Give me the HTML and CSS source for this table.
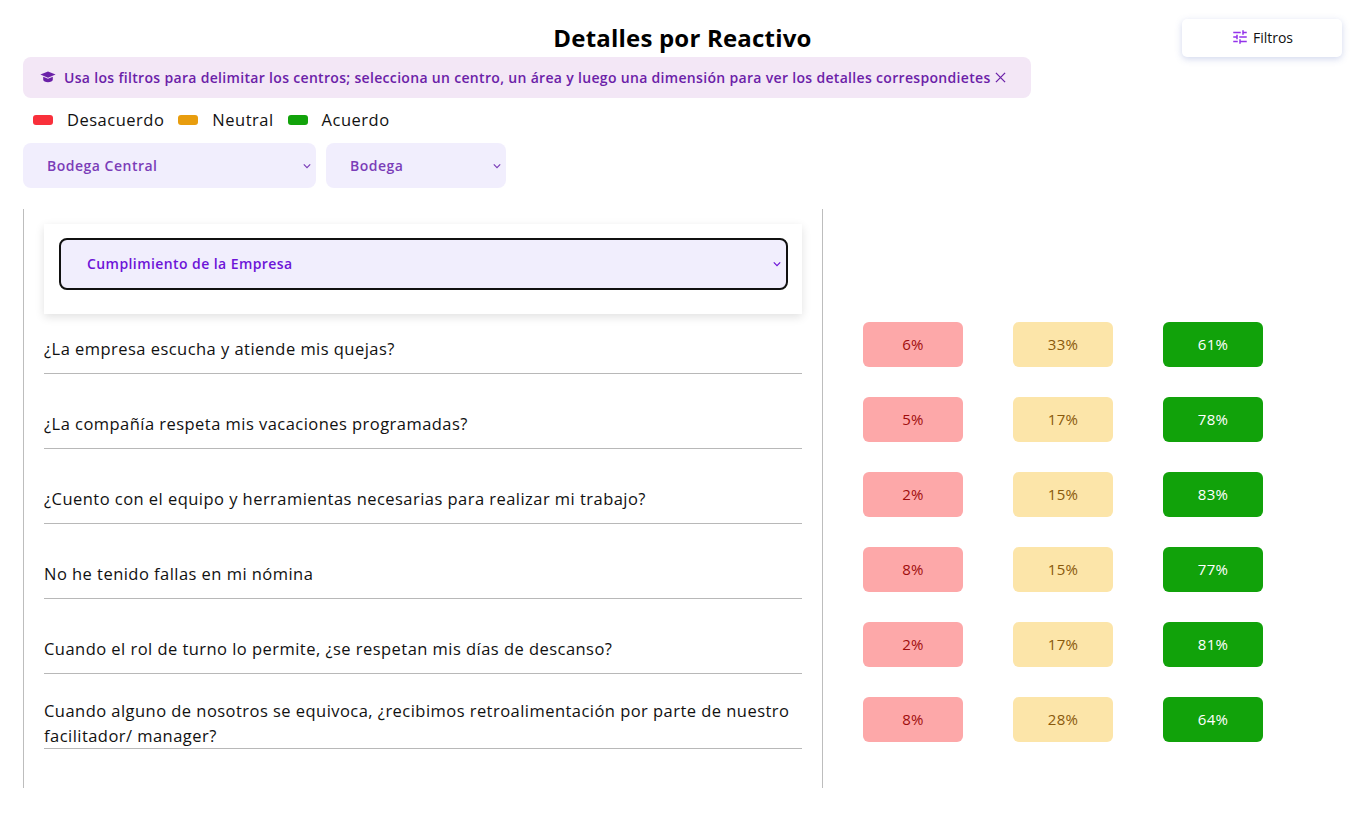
FILE: index.html
```html
<!DOCTYPE html>
<html lang="es">
<head>
<meta charset="utf-8">
<title>Detalles por Reactivo</title>
<link rel="stylesheet" href="styles.css">
</head>
<body>
<div class="page">
  <header class="header">
    <div></div>
    <h1 class="title">Detalles por Reactivo</h1>
    <button class="filter-btn">
      <svg class="tune" viewBox="0 0 24 24" width="18" height="18"><path d="M3 17v2h6v-2H3zM3 5v2h10V5H3zm10 16v-2h8v-2h-8v-2h-2v6h2zM7 9v2H3v2h4v2h2V9H7zm14 4v-2H11v2h10zm-6-4h2V7h4V5h-4V3h-2v6z" fill="currentColor"/></svg>
      <span>Filtros</span>
    </button>
  </header>

  <div class="alert">
    <svg class="cap" viewBox="0 0 20 16" width="16" height="14"><path d="M10 1 L19.5 5 L10 9 L0.5 5 Z" fill="currentColor"/><path d="M4 7.6 V11.5 C4 13.4 7 14.6 10 14.6 C13 14.6 16 13.4 16 11.5 V7.6 L10 10.2 Z" fill="currentColor"/></svg>
    <span class="alert-text">Usa los filtros para delimitar los centros; selecciona un centro, un área y luego una dimensión para ver los detalles correspondietes</span>
    <svg class="close" viewBox="0 0 12 12" width="11" height="11"><path d="M1 1 L11 11 M11 1 L1 11" stroke="currentColor" stroke-width="1.4" fill="none"/></svg>
  </div>

  <div class="legend">
    <span class="sw sw-red"></span><span class="lg-label">Desacuerdo</span>
    <span class="sw sw-orange"></span><span class="lg-label">Neutral</span>
    <span class="sw sw-green"></span><span class="lg-label">Acuerdo</span>
  </div>

  <div class="selects">
    <div class="select sel-center">
      <span>Bodega Central</span>
      <svg viewBox="0 0 10 6" width="8" height="6"><path d="M1 1 L5 5 L9 1" stroke="currentColor" stroke-width="1.5" fill="none"/></svg>
    </div>
    <div class="select sel-area">
      <span>Bodega</span>
      <svg viewBox="0 0 10 6" width="8" height="6"><path d="M1 1 L5 5 L9 1" stroke="currentColor" stroke-width="1.5" fill="none"/></svg>
    </div>
  </div>

  <div class="content">
    <section class="panel">
      <div class="card">
        <div class="dim-select">
          <span>Cumplimiento de la Empresa</span>
          <svg viewBox="0 0 10 6" width="8" height="6"><path d="M1 1 L5 5 L9 1" stroke="currentColor" stroke-width="1.5" fill="none"/></svg>
        </div>
      </div>
      <ul class="questions">
        <li class="q">¿La empresa escucha y atiende mis quejas?</li>
        <li class="q">¿La compañía respeta mis vacaciones programadas?</li>
        <li class="q">¿Cuento con el equipo y herramientas necesarias para realizar mi trabajo?</li>
        <li class="q">No he tenido fallas en mi nómina</li>
        <li class="q">Cuando el rol de turno lo permite, ¿se respetan mis días de descanso?</li>
        <li class="q">Cuando alguno de nosotros se equivoca, ¿recibimos retroalimentación por parte de nuestro facilitador/ manager?</li>
      </ul>
    </section>
    <section class="scores">
      <div class="score-row"><span class="b b-red">6%</span><span class="b b-yellow">33%</span><span class="b b-green">61%</span></div>
      <div class="score-row"><span class="b b-red">5%</span><span class="b b-yellow">17%</span><span class="b b-green">78%</span></div>
      <div class="score-row"><span class="b b-red">2%</span><span class="b b-yellow">15%</span><span class="b b-green">83%</span></div>
      <div class="score-row"><span class="b b-red">8%</span><span class="b b-yellow">15%</span><span class="b b-green">77%</span></div>
      <div class="score-row"><span class="b b-red">2%</span><span class="b b-yellow">17%</span><span class="b b-green">81%</span></div>
      <div class="score-row"><span class="b b-red">8%</span><span class="b b-yellow">28%</span><span class="b b-green">64%</span></div>
    </section>
  </div>
</div>
</body>
</html>
```

FILE: styles.css
```css
* { box-sizing: border-box; }
html, body { margin: 0; padding: 0; background: #fff; }
body {
  font-family: "Open Sans", "Liberation Sans", sans-serif;
  color: #111;
}
.page {
  padding: 19px 25px 0 23px;
}
.header {
  display: grid;
  grid-template-columns: 1fr auto 1fr;
  align-items: center;
  height: 38px;
}
.title {
  margin: 0;
  font-size: 24px;
  font-weight: 700;
  color: #000;
  line-height: 32px;
  padding-top: 0;
  letter-spacing: 0.2px;
}
.filter-btn {
  justify-self: end;
  width: 160px;
  height: 38px;
  border: none;
  background: #fff;
  border-radius: 5px;
  box-shadow: 0 2px 7px rgba(90, 110, 190, 0.28);
  display: flex;
  align-items: center;
  justify-content: center;
  gap: 4px;
  font-family: inherit;
  font-size: 14px;
  color: #111;
  padding: 0 0 2px;
}
.tune { color: #9333ea; }

.alert {
  width: 1008px;
  height: 41px;
  background: #f3e7f6;
  border-radius: 8px;
  display: flex;
  align-items: center;
  padding: 0 17px 1px;
  color: #6b21a8;
  font-size: 14px;
  font-weight: 600;
  letter-spacing: 0.32px;
}
.cap { color: #6b21a8; margin-right: 8px; flex: none; }
.alert-text { white-space: nowrap; }
.close { margin-left: 4px; color: #6b21a8; flex: none; }

.legend {
  display: flex;
  align-items: center;
  height: 24px;
  margin: 9px 0 12px;
  padding-left: 10px;
  font-size: 16.5px;
  letter-spacing: 0.5px;
  color: #111;
}
.sw {
  width: 20px;
  height: 10px;
  border-radius: 3px;
  margin-right: 14px;
  margin-top: 2px;
}
.sw-red { background: #f9303b; }
.sw-orange { background: #e89d0e; }
.sw-green { background: #12a30b; }
.lg-label { margin-right: 14px; }

.selects {
  display: flex;
  gap: 10px;
}
.select {
  height: 45px;
  background: #f1eefd;
  border-radius: 8px;
  display: flex;
  align-items: center;
  justify-content: space-between;
  padding: 0 5px 0 24px;
  color: #7b3db8;
  font-size: 14px;
  font-weight: 600;
  letter-spacing: 0.5px;
}
.sel-center { width: 293px; }
.sel-area { width: 180px; }

.content {
  display: flex;
  margin-top: 21px;
}
.panel {
  width: 800px;
  border-left: 1px solid #bdbdbd;
  border-right: 1px solid #bdbdbd;
  padding: 15px 20px 39px 20px;
}
.card {
  background: #fff;
  box-shadow: 0 3px 9px rgba(0, 0, 0, 0.12);
  padding: 14px 14px 24px 15px;
}
.dim-select {
  height: 52px;
  border: 2px solid #111;
  border-radius: 8px;
  background: #f1eefd;
  display: flex;
  align-items: center;
  justify-content: space-between;
  padding: 0 5px 1px 26px;
  color: #6d14d8;
  font-size: 14px;
  font-weight: 600;
  letter-spacing: 0.42px;
}
.questions {
  list-style: none;
  margin: 10px 0 0;
  padding: 0;
  display: flex;
  flex-direction: column;
  gap: 25px;
}
.q {
  height: 50px;
  display: flex;
  align-items: center;
  border-bottom: 1px solid #b8b8b8;
  padding-bottom: 1px;
  font-size: 16.5px;
  letter-spacing: 0.46px;
  line-height: 25px;
  color: #111;
}
.scores {
  padding: 113px 0 0 40px;
  display: flex;
  flex-direction: column;
  gap: 30px;
}
.score-row {
  display: flex;
  gap: 50px;
}
.b {
  width: 100px;
  height: 45px;
  border-radius: 6px;
  display: flex;
  align-items: center;
  justify-content: center;
  padding-bottom: 1px;
  font-size: 15px;
  letter-spacing: 0.3px;
  font-weight: 500;
}
.b-red { background: #fda8a9; color: #a00d0d; }
.b-yellow { background: #fce5a9; color: #8a5a0c; }
.b-green { background: #11a20a; color: #fff; }
```
